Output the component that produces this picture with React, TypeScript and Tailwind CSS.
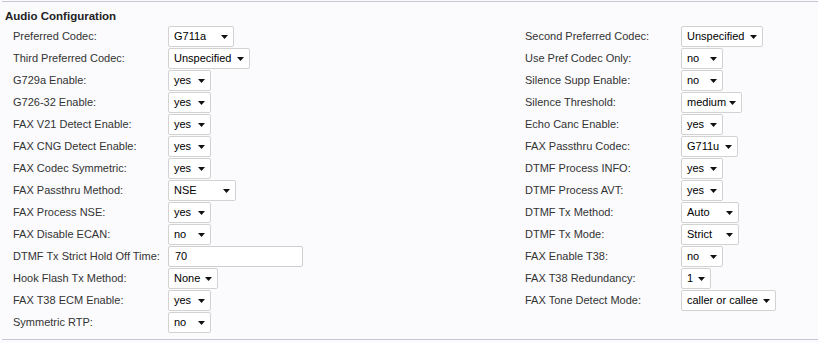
const FONT = { fontFamily: '"Liberation Sans", Arial, sans-serif' };

type Field = { label: string; value: string; w: number; text?: boolean };

const left: Field[] = [
  { label: "Preferred Codec:", value: "G711a", w: 66 },
  { label: "Third Preferred Codec:", value: "Unspecified", w: 82 },
  { label: "G729a Enable:", value: "yes", w: 43 },
  { label: "G726-32 Enable:", value: "yes", w: 43 },
  { label: "FAX V21 Detect Enable:", value: "yes", w: 43 },
  { label: "FAX CNG Detect Enable:", value: "yes", w: 43 },
  { label: "FAX Codec Symmetric:", value: "yes", w: 43 },
  { label: "FAX Passthru Method:", value: "NSE", w: 68 },
  { label: "FAX Process NSE:", value: "yes", w: 43 },
  { label: "FAX Disable ECAN:", value: "no", w: 43 },
  { label: "DTMF Tx Strict Hold Off Time:", value: "70", w: 135, text: true },
  { label: "Hook Flash Tx Method:", value: "None", w: 50 },
  { label: "FAX T38 ECM Enable:", value: "yes", w: 43 },
  { label: "Symmetric RTP:", value: "no", w: 43 },
];

const right: (Field | null)[] = [
  { label: "Second Preferred Codec:", value: "Unspecified", w: 82 },
  { label: "Use Pref Codec Only:", value: "no", w: 42 },
  { label: "Silence Supp Enable:", value: "no", w: 42 },
  { label: "Silence Threshold:", value: "medium", w: 61 },
  { label: "Echo Canc Enable:", value: "yes", w: 42 },
  { label: "FAX Passthru Codec:", value: "G711u", w: 57 },
  { label: "DTMF Process INFO:", value: "yes", w: 42 },
  { label: "DTMF Process AVT:", value: "yes", w: 42 },
  { label: "DTMF Tx Method:", value: "Auto", w: 58 },
  { label: "DTMF Tx Mode:", value: "Strict", w: 58 },
  { label: "FAX Enable T38:", value: "no", w: 42 },
  { label: "FAX T38 Redundancy:", value: "1", w: 30 },
  { label: "FAX Tone Detect Mode:", value: "caller or callee", w: 95 },
  null,
];

function Control({ f }: { f: Field }) {
  if (f.text) {
    return (
      <div
        className="h-[21px] flex items-center pl-[6px] bg-white border border-[#cfcfcf] rounded-[2px] text-black"
        style={{ width: f.w }}
      >
        {f.value}
      </div>
    );
  }
  return (
    <div
      className="h-[21px] flex items-center justify-between pl-[5px] pr-[5px] gap-[2px] bg-white border border-[#d2d2d2] rounded-[2px] text-black"
      style={{ width: f.w }}
    >
      <span className="whitespace-nowrap">{f.value}</span>
      <svg width="7" height="4" viewBox="0 0 7 4" className="shrink-0 mt-[1px]">
        <polygon points="0,0 7,0 3.5,4" fill="#111" />
      </svg>
    </div>
  );
}

function Cell({ f }: { f: Field | null }) {
  if (!f) return <><div /><div /></>;
  return (
    <>
      <div className="h-[22px] flex items-center text-[#333] whitespace-nowrap">{f.label}</div>
      <div className="h-[22px] flex items-start pt-[1px]">
        <Control f={f} />
      </div>
    </>
  );
}

function Row({ l, r }: { l: Field; r: Field | null }) {
  return (
    <>
      <Cell f={l} />
      <Cell f={r} />
    </>
  );
}

export default function App() {
  return (
    <div className="w-[818px] h-[343px] bg-[#fbfbfd] text-[11px] overflow-hidden" style={FONT}>
      <div className="mt-[1px] ml-[2px] border-t border-[#c6c6d9]" />
      <div className="pl-[5px] pt-[7px] h-[23px] font-bold text-[11.5px] text-[#222] leading-[14px]">
        Audio Configuration
      </div>
      <div className="pl-[13px] grid grid-cols-[155px_357px_156px_1fr]">
        {left.map((f, i) => (
          <Row key={i} l={f} r={right[i]} />
        ))}
      </div>
      <div className="mt-[6px] ml-[2px] border-t border-[#c6c6d9]" />
    </div>
  );
}
